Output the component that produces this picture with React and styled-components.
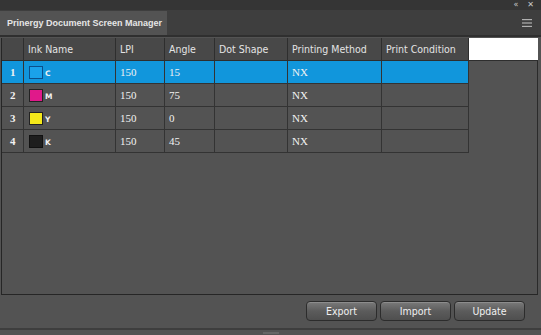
import React from 'react';
import styled, { createGlobalStyle } from 'styled-components';

const Global = createGlobalStyle`
  html, body { margin: 0; padding: 0; background: #535353; }
  body { width: 541px; height: 335px; overflow: hidden; }
`;

const Panel = styled.div`
  width: 541px;
  height: 335px;
  display: flex;
  flex-direction: column;
  background: #535353;
  font-family: "DejaVu Sans", "Liberation Sans", sans-serif;
  color: #e8e8e8;
`;

const TitleBar = styled.div`
  height: 10px;
  background: #353535;
  display: flex;
  justify-content: flex-end;
  align-items: center;
  gap: 9px;
  padding-right: 7px;
  font-size: 8px;
  color: #c8c8c8;
  line-height: 10px;
`;

const TabBar = styled.div`
  height: 25px;
  background: #3e3e3e;
  display: flex;
  align-items: stretch;
  border-bottom: 2px solid #2f2f2f;
`;

const Tab = styled.div`
  width: 167px;
  margin-top: 1px;
  background: #535353;
  display: flex;
  align-items: center;
  padding-left: 7px;
  font-family: "Liberation Sans", Arial, sans-serif;
  font-size: 9px;
  font-weight: bold;
  white-space: nowrap;
  color: #e6e6e6;
  box-sizing: border-box;
`;

const Menu = styled.div`
  margin-left: auto;
  width: 28px;
  display: flex;
  align-items: center;
  justify-content: center;
`;

const TableWrap = styled.div`
  margin: 1px 3px 0 1px;
  height: 256px;
  border-left: 1px solid #262626;
  border-right: 1px solid #2a2a2a;
  border-bottom: 1px solid #262626;
  background: #535353;
  display: flex;
  flex-direction: column;
`;

const Grid = styled.div`
  display: grid;
  grid-template-columns: 22px 92px 49px 50px 73px 94px 87px 69px;
  grid-auto-rows: 23px;
`;

const Head = styled.div`
  background: ${p => (p.$blank ? '#ffffff' : '#484848')};
  border-right: ${p => (p.$blank ? 'none' : '1px solid #2e2e2e')};
  border-bottom: 1px solid #2e2e2e;
  display: flex;
  align-items: center;
  padding-left: 4px;
  font-family: "DejaVu Sans Condensed", "DejaVu Sans", sans-serif;
  font-size: 10.5px;
  color: #e4e4e4;
  height: 23px;
  box-sizing: border-box;
`;

const Cell = styled.div`
  background: ${p => (p.$sel ? '#1196dc' : '#535353')};
  border-right: 1px solid #333;
  border-bottom: 1px solid #333;
  display: flex;
  align-items: center;
  gap: 2px;
  padding-left: ${p => (p.$num ? 8 : 4)}px;
  font-family: "Liberation Serif", serif;
  font-size: 11px;
  color: #f2f2f2;
  font-weight: ${p => (p.$num ? 'bold' : 'normal')};
  box-sizing: border-box;
`;

const Empty = styled.div``;

const Swatch = styled.span`
  width: 14px;
  height: 13px;
  background: ${p => p.$color};
  border: 1px solid ${p => p.$edge};
  box-sizing: border-box;
  margin-left: 1px;
`;

const InkLetter = styled.span`
  font-family: "DejaVu Sans", sans-serif;
  font-size: 7.5px;
  font-weight: bold;
  margin-top: 2px;
`;

const Footer = styled.div`
  flex: 1;
  display: flex;
  justify-content: flex-end;
  align-items: flex-start;
  gap: 3px;
  padding: 6px 16px 0 0;
  border-bottom: 2px solid #3e3e3e;
`;

const Button = styled.button`
  width: 71px;
  height: 20px;
  border-radius: 4px;
  border: 1px solid #2c2c2c;
  background: linear-gradient(#7a7a7a, #5c5c5c 50%, #4f4f4f);
  color: #f0f0f0;
  font-family: "DejaVu Sans Condensed", "DejaVu Sans", sans-serif;
  font-size: 10.5px;
  padding: 0;
  box-shadow: inset 0 1px 0 rgba(255,255,255,0.15);
`;

const Grip = styled.div`
  height: 5px;
  display: flex;
  justify-content: center;
  align-items: center;
  &::after {
    content: '';
    width: 16px;
    height: 2px;
    background: #666;
  }
`;

const rows = [
  { n: 1, ink: 'C', color: '#1aa2ea', edge: '#0b4f8a', angle: '15', sel: true },
  { n: 2, ink: 'M', color: '#e0198a', edge: '#222', angle: '75' },
  { n: 3, ink: 'Y', color: '#f4e81a', edge: '#222', angle: '0' },
  { n: 4, ink: 'K', color: '#1e1e1e', edge: '#111', angle: '45' },
];

const headers = ['', 'Ink Name', 'LPI', 'Angle', 'Dot Shape', 'Printing Method', 'Print Condition'];

export default function App() {
  return (
    <Panel>
      <Global />
      <TitleBar>
        <span>«</span>
        <span>✕</span>
      </TitleBar>
      <TabBar>
        <Tab>Prinergy Document Screen Manager</Tab>
        <Menu>
          <svg width="10" height="8" viewBox="0 0 10 8">
            <rect x="0" y="0" width="10" height="1.2" fill="#b0b0b0" />
            <rect x="0" y="3.4" width="10" height="1.2" fill="#b0b0b0" />
            <rect x="0" y="6.8" width="10" height="1.2" fill="#b0b0b0" />
          </svg>
        </Menu>
      </TabBar>
      <TableWrap>
        <Grid>
          {headers.map((h, i) => <Head key={i}>{h}</Head>)}
          <Head $blank />
          {rows.map(r => (
            <React.Fragment key={r.n}>
              <Cell $sel={r.sel} $num>{r.n}</Cell>
              <Cell $sel={r.sel}>
                <Swatch $color={r.color} $edge={r.edge} />
                <InkLetter>{r.ink}</InkLetter>
              </Cell>
              <Cell $sel={r.sel}>150</Cell>
              <Cell $sel={r.sel}>{r.angle}</Cell>
              <Cell $sel={r.sel} />
              <Cell $sel={r.sel}>NX</Cell>
              <Cell $sel={r.sel} />
              <Empty />
            </React.Fragment>
          ))}
        </Grid>
      </TableWrap>
      <Footer>
        <Button>Export</Button>
        <Button>Import</Button>
        <Button>Update</Button>
      </Footer>
      <Grip />
    </Panel>
  );
}
